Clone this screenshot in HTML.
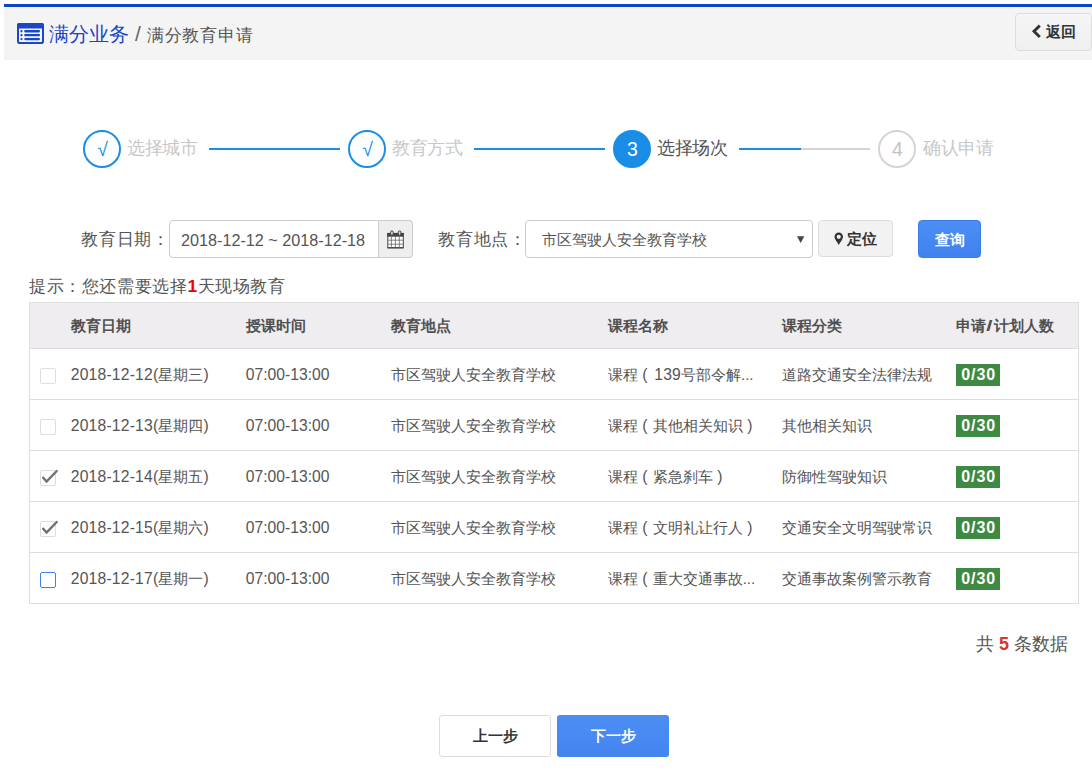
<!DOCTYPE html>
<html><head><meta charset="utf-8">
<style>
*{box-sizing:border-box;margin:0;padding:0}
html,body{width:1092px;height:773px;overflow:hidden;background:#fff}
body{font-family:"Liberation Sans",sans-serif;color:#333;position:relative}
.abs{position:absolute}
.topline{left:4px;top:4px;width:1088px;height:3px;background:#0a45c6}
.header{left:4px;top:7px;width:1088px;height:53px;background:#f4f4f4}
.crumb{left:49px;top:20px;font-size:20px;line-height:28px;white-space:nowrap;color:#555}
.crumb .b{color:#1a47c8}
.crumb .s{font-size:17.4px;letter-spacing:.8px}
.crumb .sl{display:inline-block;font-size:21px;margin:0 6px 0 6px;color:#666}
.back{position:absolute;left:1015px;top:13px;width:77px;height:38px;border:1px solid #ddd;border-radius:4px;background:linear-gradient(#f5f5f5,#efefef);font-size:15px;font-weight:bold;color:#333;line-height:36px;padding-left:30px;white-space:nowrap}
.circle{width:38px;height:38px;border-radius:50%;border:2px solid #1a8ee6;color:#1a8ee6;text-align:center;font-size:19.5px;line-height:34px;padding-left:1px}
.circle.on{background:#1a8ee6;color:#fff}
.circle.off{border-color:#d9d2d2;color:#c8c0c0}
.stext{font-size:18px;letter-spacing:-.4px;line-height:24px;color:#c8c8c8;white-space:nowrap;top:136px}
.stext.on{color:#555}
.sline{top:148px;height:2px;background:#1a8ee6}
.lbl{font-size:17.4px;letter-spacing:.75px;line-height:24px;color:#555;white-space:nowrap;top:227px}
.input{left:169px;top:220px;width:244px;height:38px;border:1px solid #ccc;border-radius:4px;background:#fff;font-size:16.2px;color:#555;line-height:38px;padding-left:11px;white-space:nowrap;overflow:hidden}
.addon{left:378px;top:220px;width:35px;height:38px;border:1px solid #ccc;border-radius:0 4px 4px 0;background:#eee}
.select{position:absolute;left:525px;top:220px;width:288px;height:38px;border:1px solid #ccc;border-radius:4px;background:#fff;font-size:15px;color:#555;line-height:38px;padding-left:16px;white-space:nowrap}
.btn-loc{position:absolute;left:818px;top:220px;width:75px;height:37px;border:1px solid #ddd;border-radius:4px;background:#f2f2f2;font-size:15px;font-weight:bold;color:#333;line-height:35px;padding-left:28px;white-space:nowrap}
.btn-q{left:918px;top:220px;width:63px;height:38px;border-radius:4px;background:linear-gradient(#4d8ef5,#3f82ee);color:#fff;font-size:15px;font-weight:bold;line-height:38px;text-align:center;border:1px solid #3a7ce8}
.tip{left:29px;top:274px;font-size:17.4px;letter-spacing:.6px;line-height:24px;color:#555;white-space:nowrap}
.tip b{color:#e00;font-weight:bold}
table{position:absolute;left:29px;top:302px;width:1050px;border-collapse:collapse;font-size:15px;color:#555}
th,td{border-top:1px solid #ddd;text-align:left;white-space:nowrap;padding:0}
td{padding-top:2px;text-indent:-0.8px}
th{text-indent:-0.5px}
table{border:1px solid #ddd}
th{background:#efedef;height:46px;font-weight:bold;color:#505050;padding-top:1px}
td{height:51px}
.badge{display:inline-block;margin-left:0.5px;background:#3f8a43;color:#fff;font-weight:bold;font-size:16px;width:44px;height:22px;line-height:22px;text-align:center;letter-spacing:1px;text-indent:1px}
.cb{display:inline-block;width:16px;height:16px;border:1px solid #ddd;border-radius:2px;vertical-align:middle;position:relative}
.cb.blue{border-color:#3b82f0}
.total{left:976px;top:631.5px;font-size:18px;line-height:24px;color:#555;white-space:nowrap}
.total b{color:#d9352a}
.prev{left:439px;top:715px;width:112px;height:42px;border:1px solid #ddd;border-radius:3px;background:#fff;font-size:15px;font-weight:bold;color:#333;text-align:center;line-height:40px}
.next{left:557px;top:715px;width:112px;height:42px;border-radius:3px;background:linear-gradient(#4d8ef5,#4384ef);font-size:15px;font-weight:bold;color:#fff;text-align:center;line-height:41px}

.n{font-size:15.7px;letter-spacing:.2px}
.n.t{letter-spacing:0}
.pl,.pr{display:inline-block;font-size:15.7px;width:15px;text-align:center}
.c0{padding-left:11px !important}
.ck{position:absolute;left:0;top:-2px}
</style></head>
<body>
<div class="abs topline"></div>
<div class="abs header"></div>
<svg class="abs" style="left:17px;top:23px" width="27" height="21" viewBox="0 0 27 21">
<rect x="1" y="1" width="25" height="19" rx="1.8" fill="none" stroke="#1a47c8" stroke-width="2"/>
<rect x="0" y="0" width="27" height="5.6" rx="2" fill="#1a47c8"/>
<circle cx="4.45" cy="8.25" r="1.15" fill="#1a47c8"/>
<circle cx="4.45" cy="12.15" r="1.15" fill="#1a47c8"/>
<circle cx="4.45" cy="16.05" r="1.15" fill="#1a47c8"/>
<rect x="7.2" y="7.1" width="15.8" height="2.3" rx="1.1" fill="#1a47c8"/>
<rect x="7.2" y="11" width="15.8" height="2.3" rx="1.1" fill="#1a47c8"/>
<rect x="7.2" y="14.9" width="15.8" height="2.3" rx="1.1" fill="#1a47c8"/>
</svg>
<div class="abs crumb"><span class="b">满分业务</span><span class="sl">/</span><span class="s">满分教育申请</span></div>
<div class="abs back"><svg style="position:absolute;left:15px;top:10px" width="11" height="15" viewBox="0 0 11 15"><path d="M8.8 1.6 L3 7.3 L8.8 13" fill="none" stroke="#333" stroke-width="2.9"/></svg>返回</div>

<div class="abs circle" style="left:83px;top:130px">&#x221A;</div>
<div class="abs stext" style="left:127px">选择城市</div>
<div class="abs sline" style="left:209px;width:131px"></div>
<div class="abs circle" style="left:348px;top:130px">&#x221A;</div>
<div class="abs stext" style="left:392px">教育方式</div>
<div class="abs sline" style="left:474px;width:131px"></div>
<div class="abs circle on" style="left:613px;top:130px">3</div>
<div class="abs stext on" style="left:657px">选择场次</div>
<div class="abs sline" style="left:739px;width:62px"></div>
<div class="abs sline" style="left:801px;width:69px;background:#d9d2d2"></div>
<div class="abs circle off" style="left:878px;top:130px">4</div>
<div class="abs stext" style="left:923px">确认申请</div>

<div class="abs lbl" style="left:81px">教育日期：</div>
<div class="abs input">2018-12-12 ~ 2018-12-18</div>
<div class="abs addon"><svg style="position:absolute;left:8px;top:9px" width="19" height="20" viewBox="0 0 19 20">
<rect x="0.3" y="3" width="16.5" height="15.3" fill="#fff"/>
<path d="M0.8 3V17.8H16.3V3" fill="none" stroke="#444" stroke-width="1"/>
<rect x="0.3" y="2.9" width="16.5" height="3.8" fill="#444"/>
<rect x="0.3" y="17.2" width="16.5" height="1.2" fill="#444"/>
<path d="M4.4 6.5V17.5M8.4 6.5V17.5M12.3 6.5V17.5M0.8 10.2H16.3M0.8 14.2H16.3" stroke="#666" stroke-width="0.8"/>
<rect x="3.6" y="0.9" width="2.6" height="4.3" rx="1.2" fill="#ddd" stroke="#444" stroke-width="1"/>
<rect x="11.3" y="0.9" width="2.6" height="4.3" rx="1.2" fill="#ddd" stroke="#444" stroke-width="1"/>
</svg></div>
<div class="abs lbl" style="left:438px">教育地点：</div>
<div class="abs select">市区驾驶人安全教育学校<svg style="position:absolute;left:270px;top:15px" width="9" height="8" viewBox="0 0 9 8"><path d="M1 0.2H8.3L4.65 7.1Z" fill="#444"/></svg></div>
<div class="abs btn-loc"><svg style="position:absolute;left:15px;top:10px" width="10" height="15" viewBox="0 0 10 15"><path d="M4.75 1.5A4.3 4.3 0 0 1 9.05 5.8C9.05 8.3 6.6 10.3 4.75 13.9C2.9 10.3 0.45 8.3 0.45 5.8A4.3 4.3 0 0 1 4.75 1.5ZM4.75 3.7A2.1 2.1 0 1 0 4.75 7.9A2.1 2.1 0 1 0 4.75 3.7Z" fill="#333" fill-rule="evenodd"/></svg>定位</div>
<div class="abs btn-q">查询</div>

<div class="abs tip">提示：您还需要选择<b>1</b>天现场教育</div>

<table>
<colgroup><col style="width:42px"><col style="width:175px"><col style="width:145px"><col style="width:217px"><col style="width:174px"><col style="width:174px"><col></colgroup>
<tr><th></th><th>教育日期</th><th>授课时间</th><th>教育地点</th><th>课程名称</th><th>课程分类</th><th>申请<span style="display:inline-block;transform:scaleX(1.5);margin:0 2px">/</span>计划人数</th></tr>
<tr><td class="c0"><span class="cb"></span></td><td><span class="n">2018-12-12</span><span class="n">(</span>星期三<span class="n">)</span></td><td><span class="n t">07:00-13:00</span></td><td>市区驾驶人安全教育学校</td><td>课程<span class="pl">(</span><span class="n" style="margin-left:1.5px">139</span>号部令解...</td><td>道路交通安全法律法规</td><td><span class="badge">0/30</span></td></tr>
<tr><td class="c0"><span class="cb"></span></td><td><span class="n">2018-12-13</span><span class="n">(</span>星期四<span class="n">)</span></td><td><span class="n t">07:00-13:00</span></td><td>市区驾驶人安全教育学校</td><td>课程<span class="pl">(</span>其他相关知识<span class="pr">)</span></td><td>其他相关知识</td><td><span class="badge">0/30</span></td></tr>
<tr><td class="c0"><span class="cb"><svg class="ck" width="22" height="18" viewBox="0 0 22 18"><path d="M2.2 8.7 L5.6 12.5 L15.7 2.0" fill="none" stroke="#707070" stroke-width="2.4" stroke-linecap="round" stroke-linejoin="miter"/></svg></span></td><td><span class="n">2018-12-14</span><span class="n">(</span>星期五<span class="n">)</span></td><td><span class="n t">07:00-13:00</span></td><td>市区驾驶人安全教育学校</td><td>课程<span class="pl">(</span>紧急刹车<span class="pr">)</span></td><td>防御性驾驶知识</td><td><span class="badge">0/30</span></td></tr>
<tr><td class="c0"><span class="cb"><svg class="ck" width="22" height="18" viewBox="0 0 22 18"><path d="M2.2 8.7 L5.6 12.5 L15.7 2.0" fill="none" stroke="#707070" stroke-width="2.4" stroke-linecap="round" stroke-linejoin="miter"/></svg></span></td><td><span class="n">2018-12-15</span><span class="n">(</span>星期六<span class="n">)</span></td><td><span class="n t">07:00-13:00</span></td><td>市区驾驶人安全教育学校</td><td>课程<span class="pl">(</span>文明礼让行人<span class="pr">)</span></td><td>交通安全文明驾驶常识</td><td><span class="badge">0/30</span></td></tr>
<tr><td class="c0"><span class="cb blue"></span></td><td><span class="n">2018-12-17</span><span class="n">(</span>星期一<span class="n">)</span></td><td><span class="n t">07:00-13:00</span></td><td>市区驾驶人安全教育学校</td><td>课程<span class="pl">(</span>重大交通事故...</td><td>交通事故案例警示教育</td><td><span class="badge">0/30</span></td></tr>
</table>

<div class="abs total">共 <b>5</b> 条数据</div>
<div class="abs prev">上一步</div>
<div class="abs next">下一步</div>
</body></html>
